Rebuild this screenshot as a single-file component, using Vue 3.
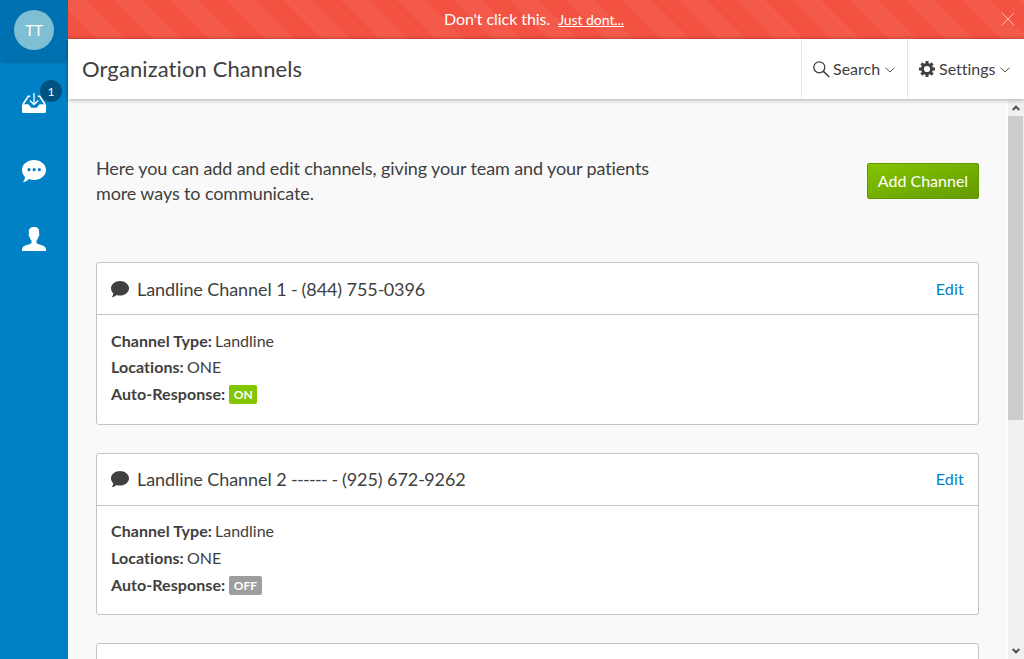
<script setup>
const channels = [
  { name: 'Landline Channel 1 - (844) 755-0396', type: 'Landline', locations: 'ONE', auto: true },
  { name: 'Landline Channel 2 ------ - (925) 672-9262', type: 'Landline', locations: 'ONE', auto: false },
  { name: '', type: '', locations: '', auto: false },
]
// Dashes are set tighter than the rest of the title.
const parts = (name) => name.split(/(-+)/)
</script>

<template>
  <div class="app">
    <nav class="side">
      <div class="user"><div class="avatar">TT</div></div>
      <a class="nav-item inbox">
        <svg width="24" height="22" viewBox="0 0 24 22">
          <path d="M8.2 4.2H6.3L1.2 12M15.8 4.2h1.9L22.800 12" fill="none" stroke="#fff" stroke-width="1.6" />
          <path d="M0 12.300h5.300q1.500 0 2.300 1.300l.9 1.400q.5.700 1.500.7h4q1 0 1.500-.7l.9-1.400q.8-1.300 2.300-1.300H24V19.500q0 1.500-1.500 1.500h-21Q0 21 0 19.500z" fill="#fff" />
          <path d="M12 1v11M7.800 8.500L12 12.500l4.200-4" fill="none" stroke="#fff" stroke-width="1.300" />
        </svg>
        <span class="badge">1</span>
      </a>
      <a class="nav-item chat">
        <svg width="24" height="23" viewBox="0 0 24 23">
          <path d="M12 0C18.600 0 24 4.400 24 10s-5.400 10-12 10c-1.900 0-3.600-.3-5.100-.9-1.600 1.800-3.600 2.900-6.100 3.200 1.400-1.800 2.100-3.500 2.200-5.300C1.100 15.200 0 12.700 0 10 0 4.400 5.400 0 12 0z" fill="#fff" />
          <g fill="#0081c6"><circle cx="7" cy="9.700" r="1.600" /><circle cx="12.200" cy="9.700" r="1.600" /><circle cx="17.300" cy="9.700" r="1.600" /></g>
        </svg>
      </a>
      <a class="nav-item person">
        <svg width="24" height="24" viewBox="0 0 24 24">
          <path d="M12 0c3 0 5.200 1.300 5.200 4.500 0 1-.1 1.600-.2 2.200.7.500.4 2.400-.6 3.100-.4 1.700-1 2.900-1.900 3.800v2.200c.4 1 2.400 1.500 4.600 2.100C22.300 18.800 24 20 24 22.500V24H0v-1.500c0-2.500 1.700-3.700 4.900-4.600 2.200-.6 4.200-1.100 4.600-2.100v-2.200c-.9-.9-1.500-2.100-1.900-3.800-1-.7-1.300-2.600-.6-3.100-.1-.6-.2-1.200-.2-2.200C6.800 1.300 9 0 12 0z" fill="#fff" />
        </svg>
      </a>
    </nav>

    <div class="main">
      <div class="banner">
        <span class="msg">Don't click this.</span><a class="link">Just dont...</a>
        <svg class="close" width="14" height="14" viewBox="0 0 14 14"><path d="M1 1l12 12M13 1L1 13" stroke="#fbb5ae" stroke-width="1" /></svg>
      </div>

      <header class="header">
        <h1>Organization Channels</h1>
        <a class="tool search">
          <svg width="17" height="17" viewBox="0 0 17 17"><circle cx="6.300" cy="6.300" r="5.500" fill="none" stroke="#404040" stroke-width="1.300" /><path d="M10.200 10.200l6 5.800" stroke="#404040" stroke-width="1.600" /></svg>
          <span>Search</span>
          <svg class="chev" width="10" height="6" viewBox="0 0 10 6"><path d="M.5.700L5 5 9.500.7" fill="none" stroke="#505050" /></svg>
        </a>
        <a class="tool settings">
          <svg width="16" height="16" viewBox="0 0 16 16">
            <circle cx="8" cy="8" r="4.600" fill="none" stroke="#404040" stroke-width="3" />
            <path d="M8 0v3M8 13v3M0 8h3M13 8h3M2.400 2.400l2 2M11.600 11.600l2 2M13.600 2.400l-2 2M4.400 11.600l-2 2" stroke="#404040" stroke-width="3" />
          </svg>
          <span>Settings</span>
          <svg class="chev" width="10" height="6" viewBox="0 0 10 6"><path d="M.5.700L5 5 9.500.7" fill="none" stroke="#505050" /></svg>
        </a>
      </header>

      <div class="body">
        <div class="content">
          <div class="intro">
            <p>Here you can add and edit channels, giving your team and your patients more ways to communicate.</p>
            <button class="add">Add Channel</button>
          </div>
          <section v-for="(c, i) in channels" :key="i" class="card">
            <template v-if="c.name">
              <div class="card-head">
                <svg width="18" height="17" viewBox="0 0 18 17"><path d="M9 0c5 0 9 3.300 9 7.300s-4 7.300-9 7.300c-1.300 0-2.500-.2-3.600-.6-1.300 1.300-2.800 2.100-4.700 2.300 1-1.200 1.500-2.500 1.600-3.900C.9 11.100 0 9.300 0 7.300 0 3.300 4 0 9 0z" fill="#404040" /></svg>
                <h2><span v-for="(s, k) in parts(c.name)" :key="k" :class="{ dash: k % 2 }">{{ s }}</span></h2>
                <a class="edit">Edit</a>
              </div>
              <div class="card-body">
                <div><b>Channel Type:</b> {{ c.type }}</div>
                <div><b>Locations:</b> {{ c.locations }}</div>
                <div><b>Auto-Response:</b> <span class="tag" :class="{ on: c.auto }">{{ c.auto ? 'ON' : 'OFF' }}</span></div>
              </div>
            </template>
          </section>
        </div>
        <div class="scrollbar">
          <svg width="8" height="6" viewBox="0 0 8 6"><path d="M.7 5L4 1.700 7.300 5" fill="none" stroke="#505050" stroke-width="2" /></svg>
          <div class="thumb"></div>
          <svg width="8" height="6" viewBox="0 0 8 6"><path d="M.7 1L4 4.300 7.300 1" fill="none" stroke="#505050" stroke-width="2" /></svg>
        </div>
      </div>
    </div>
  </div>
</template>

<style>
body { margin: 0; overflow: hidden; }
</style>

<style scoped>
* { box-sizing: border-box; }
.app { display: flex; width: 1024px; height: 659px; overflow: hidden; font-family: Lato, sans-serif; font-size: 16px; color: #404040; background: #f9f9f9; font-variant-ligatures: none; }
svg { display: block; flex: none; }
.side { width: 68px; flex: none; background: #0081c6; }
.user { height: 60px; background: #0071b0; box-shadow: 0 1px 5px rgba(0, 0, 0, .3); display: flex; align-items: center; justify-content: center; }
.avatar { width: 40px; height: 40px; border-radius: 50%; background: #7fbfd3; color: #fff; display: flex; align-items: center; justify-content: center; font-size: 15px; }
.nav-item { position: relative; display: flex; justify-content: center; height: 68px; }
.inbox { padding-top: 32px; }
.chat { padding-top: 32px; }
.person { padding-top: 31px; }
.badge { position: absolute; left: 40px; top: 20px; width: 22px; height: 22px; border-radius: 50%; background: #005381; color: #fff; font-size: 12px; line-height: 23px; text-align: center; }
.main { flex: 1; min-width: 0; display: flex; flex-direction: column; }
.banner { position: relative; height: 39px; flex: none; display: flex; align-items: center; justify-content: center; padding: 0 24px 1px 0; color: #fff; background: repeating-linear-gradient(45deg, #f35141 0 20px, #f45a4a 20px 40px); box-shadow: inset 0 -2px 3px -1px rgba(0, 0, 0, .08); }
.msg { font-size: 16px; padding-bottom: 1px; letter-spacing: -.06px; }
.link { font-size: 14px; margin-left: 8px; padding-top: 1px; letter-spacing: -.06px; text-decoration: underline; }
.close { position: absolute; right: 9px; top: 12px; }
.header { position: relative; height: 60px; flex: none; display: flex; background: #fff; box-shadow: 0 1px 5px rgba(0, 0, 0, .3); z-index: 1; }
h1 { flex: 1; margin: 0; padding-left: 14px; font-size: 22px; font-weight: 400; line-height: 60px; letter-spacing: .1px; }
.tool { display: flex; align-items: center; border-left: 1px solid #e6e6e6; line-height: 20px; }
.search { width: 106px; padding-left: 11px; gap: 3px; }
.search .chev { margin-left: 2px; }
.settings { width: 117px; padding-left: 11px; gap: 4px; }
.chev { margin: 2px 0 0; }
.body { flex: 1; min-height: 0; display: flex; overflow: hidden; }
.content { flex: 1; padding: 57px 28px 0; overflow: hidden; }
.intro { display: flex; justify-content: space-between; align-items: flex-start; height: 106px; }
p { margin: 0; width: 570px; font-size: 18px; line-height: 25px; letter-spacing: -.115px; }
.add { width: 112px; height: 36px; margin-top: 7px; padding: 0 0 2px; border: 1px solid #639700; border-radius: 2px; background: linear-gradient(to bottom right, #83c500, #659a00); color: #fff; font: 16px Lato, sans-serif; }
.card { height: 162.500px; margin-bottom: 28px; border: 1px solid #c4c4c4; border-radius: 3px; background: #fff; }
.card-head { display: flex; align-items: center; height: 52px; padding: 0 14px; border-bottom: 1px solid #c4c4c4; }
.card-head svg { margin-top: 1px; }
h2 { flex: 1; margin: 0 0 0 8px; font-size: 18px; font-weight: 400; line-height: 26px; letter-spacing: -.08px; }
.dash { letter-spacing: -.7px; }
.edit { color: #0081c6; padding-bottom: 1px; letter-spacing: .2px; }
.card-body { padding: 12.700px 14px; line-height: 26.700px; }
b { letter-spacing: .06px; margin-right: -1px; }
.tag { display: inline-block; height: 19px; margin-left: 1px; padding: 0 4.500px; border-radius: 2px; background: #9e9e9e; color: #fff; font-size: 12px; font-weight: 700; line-height: 20px; vertical-align: 1px; }
.tag.on { background: #82c600; }
.scrollbar { width: 17px; flex: none; background: #f0f0f0; border-left: 1px solid #fff; display: flex; flex-direction: column; align-items: center; padding: 6px 0 5px; }
.thumb { width: 15px; height: 304px; margin: 5px 0 auto; background: #cdcdcd; align-self: flex-start; }
</style>
